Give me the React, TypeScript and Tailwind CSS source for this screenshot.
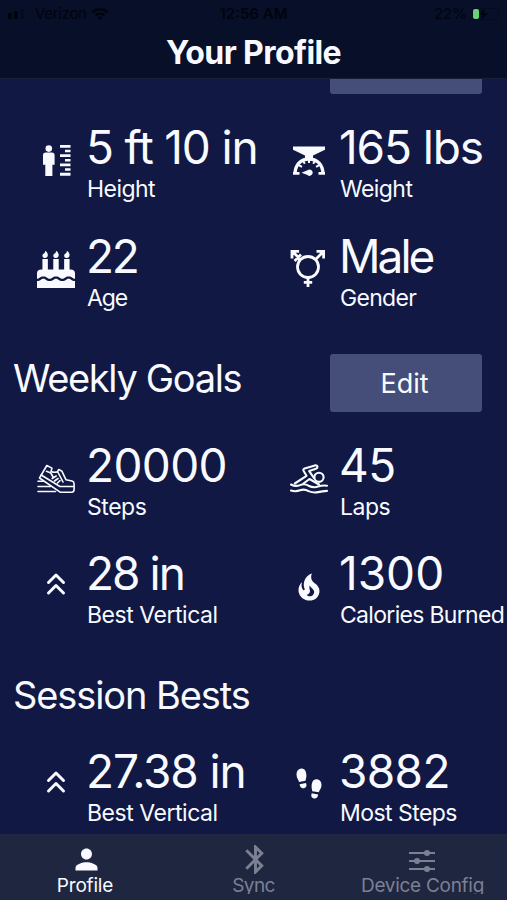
import type { ReactNode } from "react";
import { FaBirthdayCake } from "react-icons/fa";
import { FiChevronsUp } from "react-icons/fi";
import { MdBluetooth, MdPerson, MdWifi } from "react-icons/md";

interface Stat {
  value: string;
  label: string;
  icon: ReactNode;
  valueClass: string;
  labelClass: string;
}

function HeightIcon() {
  return (
    <svg width="30" height="34" viewBox="0 0 30 34" fill="currentColor" className="ml-[2px]">
      <circle cx="6.8" cy="4.6" r="3.3" />
      <path d="M3.800 8.600h6q2.800 0 2.800 2.800v9.300h-2.200V32H3.300V20.700H1v-9.300Q1 8.600 3.800 8.600z" />
      <path d="M18 1h10.500v2.800H18zM23 5.700h5.500v2.500H23zM18 10.200h10.500V13H18zM23 15h5.500v2.500H23zM18 19.500h10.500v2.800H18zM23 24.200h5.500v2.500H23zM18 28.800h10.500v2.900H18z" />
    </svg>
  );
}

function ScaleIcon() {
  return (
    <svg width="32" height="30" viewBox="0 0 32 30" fill="currentColor">
      <path d="M0 .5h32v3.200L20 9.600v3.300h-8V9.600L0 3.700z" />
      <path d="M2 28c0-9 5.500-15 14-15s14 6 14 15" fill="none" stroke="currentColor" strokeWidth="3.400" />
      <path d="M0 26h6.500v2.800H0zM25.500 26H32v2.800h-6.500z" />
      <path d="M5.500 19l3.500 1.800M9.800 14.500l2 3.300M16 12v5M22.200 14.500l-2 3.300M26.500 19L23 20.800" stroke="currentColor" strokeWidth="2" />
      <path d="M8.500 26.700l6-2.400a3.100 3.100 0 1 1 0 4.800z" />
    </svg>
  );
}

function GenderIcon() {
  return (
    <svg width="36" height="38" viewBox="0 0 36 38" fill="none" stroke="currentColor" strokeWidth="2.800" className="mr-[2px] mb-[3px]">
      <circle cx="18" cy="18" r="10.500" />
      <path d="M25.500 10.500l7.500-7.500M26.500 2.400h7.100v7.100M10.500 10.500L3 3M2 9.500V2.400h7.100M4.600 12l6.400-6.400" />
      <path d="M18 28.500v9.500M13.800 33.400h8.400" />
    </svg>
  );
}

function ShoeIcon() {
  return (
    <svg width="38" height="30" viewBox="0 0 38 30" fill="none" stroke="currentColor" strokeWidth="1.600" strokeLinejoin="round" strokeLinecap="round">
      <path d="M2.500 14L9.800 1.500l5.200 2.600-1 3.300q3.500 1.500 6.400.3l1.400-2.200 3.200 1.800 3.900 8.400 6.200 1.300q2 .6 2 3v5.500q0 2.800-2.800 2.800H23.500L2.500 14z" />
      <path d="M4.200 11l18.700 11.500H37M9.500 7.300L13.800 9l2.500 4.500M20.800 8l5.200 10M15.200 14.500l4-2.500M17.500 17l3.500-2.500M20.500 19l2.500-2.500" />
      <path d="M1 17.300h5.500M1 22.500h12.500M1 27.500h17.500" />
    </svg>
  );
}

function SwimIcon() {
  return (
    <svg width="38" height="30" viewBox="0 0 38 30" fill="none" stroke="currentColor" strokeWidth="2.100" strokeLinejoin="round" strokeLinecap="round">
      <path d="M4.800 19.500l11.700-7.700-3-5q-.6-1.600 1.100-2.400l10.400-3q2.300-.4 2.500 1.400 0 1.500-1.600 2l-6.700 2.300 4.500 6.500" />
      <circle cx="29" cy="13.300" r="4.600" />
      <path d="M13.500 19.500l6-4.500 9.500 5.500" />
      <path d="M1 20.500q4.500 2.500 9 .6t8.500.6q5 2.500 9.500.9t9-.9M1 26.500q4.500 1.500 9-.2t8.500.8q5 2 9.500 1t9-1.200" />
    </svg>
  );
}

function FlameIcon() {
  return (
    <svg width="36" height="36" viewBox="0 0 24 24" fill="currentColor">
      <path d="M17.660 11.200C17.430 10.900 17.150 10.640 16.890 10.380C16.220 9.780 15.460 9.350 14.820 8.720C13.330 7.260 13 4.850 13.950 3C13 3.230 12.170 3.750 11.460 4.320C8.870 6.400 7.850 10.070 9.070 13.220C9.110 13.320 9.150 13.420 9.150 13.550C9.150 13.770 9 13.970 8.800 14.050C8.570 14.150 8.330 14.090 8.140 13.930C8.080 13.880 8.040 13.830 8 13.760C6.870 12.330 6.690 10.280 7.450 8.640C5.780 10 4.870 12.300 5 14.470C5.060 14.970 5.120 15.470 5.290 15.970C5.430 16.570 5.700 17.170 6 17.700C7.080 19.430 8.950 20.670 10.960 20.920C13.100 21.190 15.390 20.800 17.030 19.320C18.860 17.660 19.500 15 18.560 12.720L18.430 12.460C18.220 12 17.660 11.200 17.660 11.200M14.500 17.500C14.220 17.740 13.760 18 13.400 18.100C12.280 18.500 11.160 17.940 10.500 17.280C11.690 17 12.400 16.120 12.610 15.230C12.780 14.430 12.460 13.770 12.330 13C12.210 12.260 12.230 11.630 12.500 10.940C12.690 11.320 12.890 11.700 13.130 12C13.900 13 15.110 13.440 15.370 14.800C15.410 14.940 15.430 15.080 15.430 15.230C15.460 16.050 15.100 16.950 14.500 17.500Z" />
    </svg>
  );
}

function FootprintsIcon() {
  return (
    <svg width="26" height="32" viewBox="0 0 26 32" fill="currentColor" className="mb-[2px]">
      <path d="M5 .6C8.300.1 10.200 3 10.400 7c.1 2.600-.6 4.200-.9 5.800L3 13.900C2.500 11.800.6 10.200.5 6.800.4 3.500 2 1 5 .6z" />
      <path d="M3.600 16.300l6.400-1.200c1.100 2.800.3 4.700-2 5.100-2.500.4-4-1.100-4.400-3.900z" />
      <path d="M21 11.300c-3.300-.5-5.200 2.400-5.400 6.400-.1 2.600.4 3.900.7 5.500l6.500 1.100c.5-2.100 2.500-3.500 2.700-6.800.2-3.300-1.500-5.800-4.500-6.200z" />
      <path d="M22.200 26.500l-6.500-1.200c-1.100 2.800-.2 4.700 2.100 5.100 2.500.4 4-1.100 4.400-3.900z" />
    </svg>
  );
}

function SlidersIcon() {
  return (
    <svg width="26" height="24" viewBox="0 0 26 24" fill="currentColor" className="mr-[2px]">
      <path d="M0 3h26v2H0zM0 11h26v2H0zM0 19h26v2H0z" />
      <circle cx="18" cy="4" r="3" />
      <circle cx="8" cy="12" r="3" />
      <circle cx="18" cy="20" r="3" />
    </svg>
  );
}

const profileStats: Stat[] = [
  { value: "5 ft 10 in", label: "Height", icon: <HeightIcon />, valueClass: "tracking-[-0.026em]", labelClass: "tracking-[-0.024em]" },
  { value: "165 lbs", label: "Weight", icon: <ScaleIcon />, valueClass: "tracking-[-0.024em]", labelClass: "tracking-[-0.024em]" },
  {
    value: "22",
    label: "Age",
    icon: <FaBirthdayCake className="mb-px h-[37px] w-[38px]" preserveAspectRatio="none" />,
    valueClass: "tracking-[-0.05em]",
    labelClass: "tracking-[-0.05em]",
  },
  { value: "Male", label: "Gender", icon: <GenderIcon />, valueClass: "tracking-[-0.065em]", labelClass: "tracking-[-0.03em]" },
];

const goalStats: Stat[] = [
  { value: "20000", label: "Steps", icon: <ShoeIcon />, valueClass: "tracking-[-0.014em]", labelClass: "tracking-[-0.02em]" },
  { value: "45", label: "Laps", icon: <SwimIcon />, valueClass: "tracking-[-0.01em]", labelClass: "tracking-[-0.02em]" },
  { value: "28 in", label: "Best Vertical", icon: <FiChevronsUp className="mb-1.5 h-[36px] w-[36px]" />, valueClass: "tracking-[-0.043em]", labelClass: "tracking-[-0.02em]" },
  { value: "1300", label: "Calories Burned", icon: <FlameIcon />, valueClass: "tracking-[0em]", labelClass: "tracking-[-0.03em]" },
];

const bestStats: Stat[] = [
  { value: "27.38 in", label: "Best Vertical", icon: <FiChevronsUp className="mb-1.5 h-[36px] w-[36px]" />, valueClass: "tracking-[-0.024em]", labelClass: "tracking-[-0.02em]" },
  { value: "3882", label: "Most Steps", icon: <FootprintsIcon />, valueClass: "tracking-[-0.014em]", labelClass: "tracking-[-0.024em]" },
];

function StatCell({ stat }: { stat: Stat }) {
  return (
    <div className="flex h-[84px] items-center pl-[26px]">
      <div className="flex w-[60px] shrink-0 justify-center">{stat.icon}</div>
      <div className="whitespace-nowrap">
        <div className={`text-[46px] leading-[56px] ${stat.valueClass}`}>{stat.value}</div>
        <div className={`pl-px text-[23px] leading-[28px] ${stat.labelClass}`}>{stat.label}</div>
      </div>
    </div>
  );
}

function StatGrid({ stats }: { stats: Stat[] }) {
  return (
    <div className="grid auto-rows-[108.5px] grid-cols-[253px_254px] pt-[25px]">
      {stats.map((s) => (
        <StatCell key={s.value} stat={s} />
      ))}
    </div>
  );
}

function EditButton({ label }: { label?: string }) {
  return (
    <button className="h-[58px] w-[152px] rounded-[3px] bg-[#454e78] pt-1 pr-[3px] text-[27px]">
      {label}
    </button>
  );
}

export default function App() {
  return (
    <div className="flex h-[900px] w-[507px] flex-col overflow-hidden bg-[#101843] font-['Inter','Liberation_Sans',sans-serif] text-[#f8faff]">
      <header className="h-[79px] shrink-0 border-b border-[#17203a] bg-[#070f29]">
        <div className="grid h-[28px] grid-cols-3 items-center px-2 text-[15px] text-[#01040d]">
          <div className="flex items-center gap-1">
            <div className="flex w-[23px] items-end gap-[2px]">
              <span className="h-[6px] w-[4px] rounded-[1px] bg-current" />
              <span className="h-[8px] w-[4px] rounded-[1px] bg-current" />
              <span className="h-[10px] w-[4px] rounded-[1px] bg-[#050b20]" />
            </div>
            <span className="tracking-[-0.02em]">Verizon</span>
            <MdWifi className="h-[18px] w-[18px]" />
          </div>
          <div className="text-center font-semibold">12:56 AM</div>
          <div className="flex items-center justify-end gap-[5px]">
            <span>22%</span>
            <div className="flex h-[12px] w-[27px] items-center rounded-[3px] border border-[#050b20]">
              <span className="h-[10px] w-[6px] rounded-[2px] bg-[#67d178]" />
              <svg width="9" height="10" viewBox="0 0 9 10" fill="currentColor">
                <path d="M5.500 0L0 5.800h3.600L3 10l6-5.800H5.200z" />
              </svg>
            </div>
          </div>
        </div>
        <h1 className="text-center text-[32px] leading-[50px] font-bold tracking-[-0.018em]">Your Profile</h1>
      </header>

      <main className="min-h-0 flex-1 overflow-hidden">
        <section className="-mt-[43px] h-[317.5px]">
          {/* scrolled under the header, only the lower edge of the button shows */}
          <div className="flex h-[58px] justify-end pr-[25px]">
            <EditButton />
          </div>
          <StatGrid stats={profileStats} />
        </section>

        <section className="h-[317px]">
          <div className="flex h-[58px] items-start justify-between pr-[25px] pl-[13px]">
            <h2 className="text-[38px] leading-[48px] tracking-[-0.035em]">Weekly Goals</h2>
            <EditButton label="Edit" />
          </div>
          <StatGrid stats={goalStats} />
        </section>

        <section>
          <div className="h-[47px] pl-[13px]">
            <h2 className="text-[38px] leading-[48px] tracking-[-0.029em]">Session Bests</h2>
          </div>
          <StatGrid stats={bestStats} />
        </section>
      </main>

      <nav className="grid h-[66px] shrink-0 grid-cols-3 bg-[#1f2640] text-[#7c8093]">
        <div className="flex flex-col items-center text-[#f8faff]">
          <div className="flex h-[41px] items-center pt-[10px] pl-[3px]">
            <MdPerson className="h-[33px] w-[33px]" />
          </div>
          <div className="h-[19px] overflow-hidden pl-px text-[19px] leading-[22px] tracking-[-0.01em]">Profile</div>
        </div>
        <div className="flex flex-col items-center">
          <div className="flex h-[41px] items-center pt-[10px] pl-[3px]">
            <MdBluetooth className="h-[35px] w-[35px]" />
          </div>
          <div className="h-[19px] overflow-hidden text-[19px] leading-[22px] tracking-[-0.03em]">Sync</div>
        </div>
        <div className="flex flex-col items-center">
          <div className="flex h-[41px] items-center pt-[13px]">
            <SlidersIcon />
          </div>
          <div className="h-[19px] overflow-hidden text-[19px] leading-[22px] tracking-[-0.015em]">Device Config</div>
        </div>
      </nav>
    </div>
  );
}
